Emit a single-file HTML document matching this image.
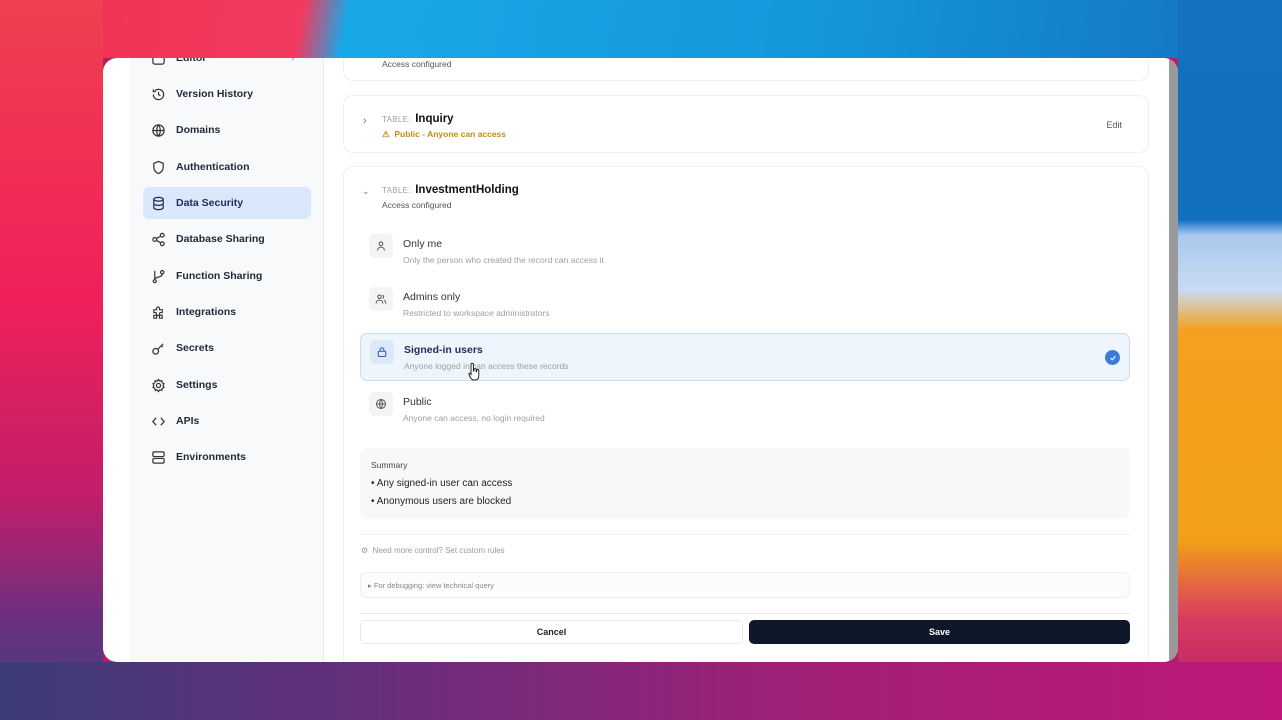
<!DOCTYPE html>
<html><head><meta charset="utf-8"><style>
*{box-sizing:border-box;margin:0;padding:0}
body{width:1282px;height:720px;overflow:hidden;position:relative;font-family:"Liberation Sans",sans-serif;background:#b02068}
.bg{position:absolute}
.win{position:absolute;left:103px;top:58px;width:1075px;height:604px;background:#fff;border-radius:14px;overflow:hidden}
.sb{position:absolute;left:27px;top:0;width:194px;height:604px;background:#f8f9fa;border-right:1px solid #e8eaed}
.nav{position:absolute;left:13px;width:168px;height:32px;display:flex;align-items:center;font-size:10.5px;color:#1f2937;font-weight:bold}
.nav svg{position:absolute;left:8px;width:15px;height:15px}
.nav span{position:absolute;left:33px}
.nav.act{background:#dbe7fb;border-radius:6px;color:#1e2a5a}
.scroll{position:absolute;right:0;top:0;width:9px;height:604px;background:#9a9a9a}
.card{position:absolute;left:240px;width:806px;border:1px solid #eef0f2;border-radius:10px;background:#fff}
.lbl{font-size:8px;color:#9aa0a8;letter-spacing:.3px}
.ttl{font-size:11.5px;color:#111;font-weight:bold}
.sub{font-size:8.5px;color:#555}
.opt{position:absolute;left:257px;width:770px;height:48px;border-radius:7px}
.opt .ic{position:absolute;left:9px;top:6px;width:24px;height:24px;border-radius:5px;background:#f3f4f6;display:flex;align-items:center;justify-content:center}
.opt .t{position:absolute;left:43px;top:10px;font-size:10.5px;color:#333}
.opt .d{position:absolute;left:43px;top:27px;font-size:8.5px;color:#9aa0a6}
.sel{background:#eef5fd;border:1px solid #c9dcf3}
.sel .ic{background:#dce8fa}
.sel .t{color:#1e2a5a;font-weight:bold}
</style></head><body>
<div class="bg" style="left:0;top:0;width:1282px;height:58px;background:linear-gradient(100deg,#f03050 0,#f23a60 300px,#18a8e8 345px,#1498dc 800px,#1470c0 1282px)"></div>
<div class="bg" style="left:1178px;top:0;width:104px;height:720px;background:linear-gradient(180deg,#1470c0 0,#1270c0 220px,#a8c8ee 235px,#c8dcf2 290px,#f5a020 330px,#f2a018 540px,#d83a60 620px,#b01a70 720px)"></div>
<div class="bg" style="left:0;top:0;width:103px;height:720px;background:linear-gradient(180deg,#f04050 0,#f0205a 300px,#c01e6a 500px,#6a3080 620px,#404078 720px)"></div>
<div class="bg" style="left:0;top:662px;width:1282px;height:58px;background:linear-gradient(90deg,#3c3c78 0,#6a2e7a 400px,#a02078 800px,#c0187a 1282px)"></div>
<div class="win">
<div class="sb">
<div class="nav" style="top:-16px"><svg viewBox="0 0 16 16" fill="none" stroke="#333" stroke-width="1.3"><rect x="2" y="2" width="12" height="12" rx="2"/></svg><span>Editor</span><span style="left:148px;color:#aaa">›</span></div>
<div class="nav" style="top:20px"><svg viewBox="0 0 16 16" fill="none" stroke="#333" stroke-width="1.3"><path d="M2.5 8a5.5 5.5 0 1 0 1.6-3.9M2.5 2.5v2.5H5M8 5v3l2 1.5"/></svg><span>Version History</span></div>
<div class="nav" style="top:56px"><svg viewBox="0 0 16 16" fill="none" stroke="#333" stroke-width="1.3"><circle cx="8" cy="8" r="6"/><path d="M2 8h12M8 2c-2.5 3-2.5 9 0 12M8 2c2.5 3 2.5 9 0 12"/></svg><span>Domains</span></div>
<div class="nav" style="top:93px"><svg viewBox="0 0 16 16" fill="none" stroke="#333" stroke-width="1.3"><path d="M8 1.5l5 2v4.5c0 3-2.2 5.2-5 6.5-2.8-1.3-5-3.5-5-6.5V3.5z"/></svg><span>Authentication</span></div>
<div class="nav act" style="top:129px"><svg viewBox="0 0 16 16" fill="none" stroke="#1e2a5a" stroke-width="1.3"><ellipse cx="8" cy="3.5" rx="5" ry="2"/><path d="M3 3.5v9c0 1.1 2.2 2 5 2s5-.9 5-2v-9M3 8c0 1.1 2.2 2 5 2s5-.9 5-2"/></svg><span>Data Security</span></div>
<div class="nav" style="top:165px"><svg viewBox="0 0 16 16" fill="none" stroke="#333" stroke-width="1.3"><circle cx="4" cy="8" r="2"/><circle cx="12" cy="3.5" r="2"/><circle cx="12" cy="12.5" r="2"/><path d="M5.8 7l4.4-2.5M5.8 9l4.4 2.5"/></svg><span>Database Sharing</span></div>
<div class="nav" style="top:202px"><svg viewBox="0 0 16 16" fill="none" stroke="#333" stroke-width="1.3"><circle cx="4" cy="13" r="1.6"/><circle cx="12" cy="3.5" r="1.8"/><path d="M4 11V2M12 5.3c0 4-8 3-8 5.7"/></svg><span>Function Sharing</span></div>
<div class="nav" style="top:238px"><svg viewBox="0 0 16 16" fill="none" stroke="#333" stroke-width="1.2"><path d="M3 5h3V3.5a1.5 1.5 0 0 1 3 0V5h3v3h-1.5a1.5 1.5 0 0 0 0 3H12v3H9v-1.5a1.5 1.5 0 0 0-3 0V14H3v-3h1.5a1.5 1.5 0 0 0 0-3H3z"/></svg><span>Integrations</span></div>
<div class="nav" style="top:274px"><svg viewBox="0 0 16 16" fill="none" stroke="#333" stroke-width="1.3"><circle cx="5" cy="11" r="3"/><path d="M7.2 8.8L13 3M11 5l1.5 1.5"/></svg><span>Secrets</span></div>
<div class="nav" style="top:311px"><svg viewBox="0 0 16 16" fill="none" stroke="#333" stroke-width="1.3"><circle cx="8" cy="8" r="2.2"/><path d="M8 1.5l1.3 1.8 2.2-.5.4 2.2 2 1-1 2 1 2-2 1-.4 2.2-2.2-.5L8 14.5l-1.3-1.8-2.2.5-.4-2.2-2-1 1-2-1-2 2-1 .4-2.2 2.2.5z"/></svg><span>Settings</span></div>
<div class="nav" style="top:347px"><svg viewBox="0 0 16 16" fill="none" stroke="#333" stroke-width="1.4"><path d="M5.5 4L2 8l3.5 4M10.5 4L14 8l-3.5 4"/></svg><span>APIs</span></div>
<div class="nav" style="top:383px"><svg viewBox="0 0 16 16" fill="none" stroke="#333" stroke-width="1.3"><rect x="2" y="2" width="12" height="5" rx="1.5"/><rect x="2" y="9" width="12" height="5" rx="1.5"/></svg><span>Environments</span></div>
</div>

<div class="card" style="top:-20px;height:43px"><div class="sub" style="position:absolute;left:38px;top:20px">Access configured</div></div>
<div class="card" style="top:37px;height:58px">
<div style="position:absolute;left:19px;top:19px;color:#777;font-size:11px">›</div>
<div style="position:absolute;left:38px;top:13px"><span class="lbl">TABLE:</span> <span class="ttl">Inquiry</span></div>
<div style="position:absolute;left:38px;top:33px;font-size:8.5px;color:#c58a1a;font-weight:bold">⚠&nbsp; Public - Anyone can access</div>
<div style="position:absolute;right:26px;top:24px;font-size:9px;color:#555">Edit</div>
</div>
<div class="card" style="top:108px;height:520px">
<div style="position:absolute;left:18px;top:19px;color:#777;font-size:9px">⌄</div>
<div style="position:absolute;left:38px;top:13px"><span class="lbl">TABLE:</span> <span class="ttl">InvestmentHolding</span></div>
<div class="sub" style="position:absolute;left:38px;top:33px">Access configured</div>
</div>

<div class="opt" style="top:170px"><div class="ic"><svg width="12" height="12" viewBox="0 0 16 16" fill="none" stroke="#555" stroke-width="1.3"><circle cx="8" cy="5" r="2.5"/><path d="M3.5 14c0-3 2-4.5 4.5-4.5s4.5 1.5 4.5 4.5"/></svg></div><div class="t">Only me</div><div class="d">Only the person who created the record can access it</div></div>
<div class="opt" style="top:223px"><div class="ic"><svg width="12" height="12" viewBox="0 0 16 16" fill="none" stroke="#555" stroke-width="1.3"><circle cx="6" cy="5" r="2.3"/><path d="M1.5 14c0-3 2-4.5 4.5-4.5s4.5 1.5 4.5 4.5M10 3a2.2 2.2 0 0 1 0 4.2M12 9.8c1.5.6 2.5 2 2.5 4.2"/></svg></div><div class="t">Admins only</div><div class="d">Restricted to workspace administrators</div></div>
<div class="opt sel" style="top:275px"><div class="ic"><svg width="12" height="12" viewBox="0 0 16 16" fill="none" stroke="#2b5fb8" stroke-width="1.4"><rect x="3" y="7" width="10" height="7" rx="1.5"/><path d="M5.5 7V5a2.5 2.5 0 0 1 5 0v2"/></svg></div><div class="t">Signed-in users</div><div class="d">Anyone logged in can access these records</div>
<div style="position:absolute;right:9px;top:16px;width:15px;height:15px;border-radius:50%;background:#3b7be0;display:flex;align-items:center;justify-content:center"><svg width="8" height="8" viewBox="0 0 10 10" fill="none" stroke="#fff" stroke-width="1.4"><path d="M2 5.2l2 2 4-4.4"/></svg></div></div>
<div class="opt" style="top:328px"><div class="ic"><svg width="12" height="12" viewBox="0 0 16 16" fill="none" stroke="#555" stroke-width="1.3"><circle cx="8" cy="8" r="6"/><path d="M2 8h12M8 2c-2.5 3-2.5 9 0 12M8 2c2.5 3 2.5 9 0 12"/></svg></div><div class="t">Public</div><div class="d">Anyone can access, no login required</div></div>

<svg style="position:absolute;left:365px;top:304px" width="12" height="20" viewBox="0 0 12 20"><path d="M3 2.5a1.2 1.2 0 0 1 2.4 0V9h.5V7.5a1.2 1.2 0 0 1 2.3 0V9.5h.4V8.5a1.1 1.1 0 0 1 2.2 0V14c0 2.5-1.5 4-4 4H6c-1.5 0-2.5-.8-3.3-2L1 12.5c-.5-1 .6-1.8 1.3-1L3 12.5z" fill="#fff" stroke="#111" stroke-width="0.9"/></svg>

<div style="position:absolute;left:257px;top:390px;width:770px;height:71px;background:#f7f8f9;border-radius:8px">
<div style="position:absolute;left:11px;top:12px;font-size:8.5px;color:#444">Summary</div>
<div style="position:absolute;left:11px;top:30px;font-size:10px;color:#222">• Any signed-in user can access</div>
<div style="position:absolute;left:11px;top:48px;font-size:10px;color:#222">• Anonymous users are blocked</div>
</div>
<div style="position:absolute;left:257px;top:476px;width:770px;height:1px;background:#eef0f2"></div>
<div style="position:absolute;left:258px;top:488px;font-size:8px;color:#999">⚙&nbsp; Need more control? Set custom rules</div>
<div style="position:absolute;left:257px;top:514px;width:770px;height:26px;border:1px solid #eceef0;border-radius:6px;background:#fcfcfc;font-size:7.5px;color:#888;padding:8px 0 0 7px">▸ For debugging: view technical query</div>
<div style="position:absolute;left:257px;top:555px;width:770px;height:1px;background:#e4e6e8"></div>
<div style="position:absolute;left:257px;top:562px;width:383px;height:24px;border:1px solid #e6e8ea;border-radius:5px;background:#fff;text-align:center;font-size:9px;font-weight:bold;color:#222;line-height:22px">Cancel</div>
<div style="position:absolute;left:646px;top:562px;width:381px;height:24px;border-radius:5px;background:#0f172a;text-align:center;font-size:9px;font-weight:bold;color:#fff;line-height:24px">Save</div>
<div class="scroll"></div>
</div>
</body></html>
